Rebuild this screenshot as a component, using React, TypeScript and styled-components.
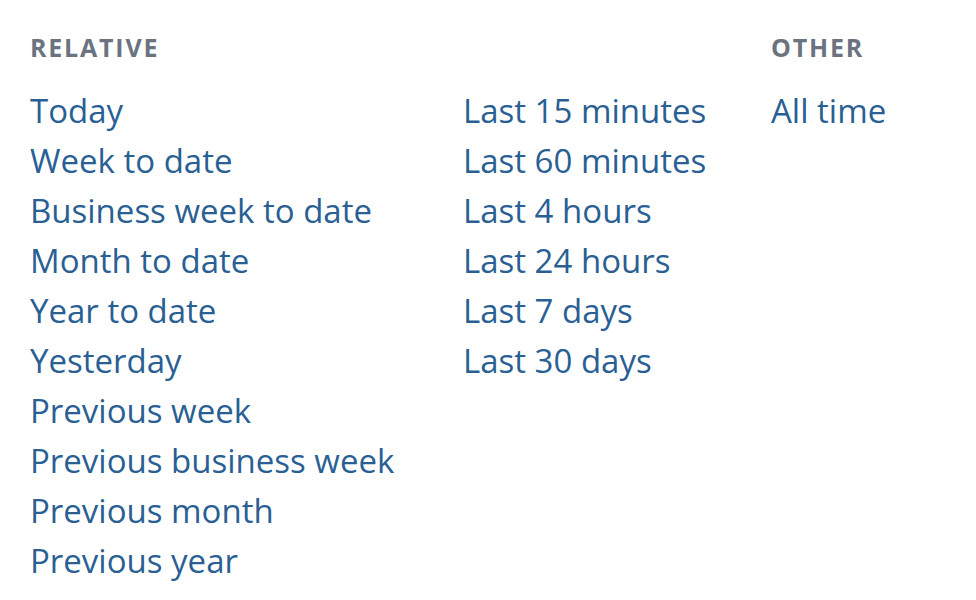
import React from 'react';
import styled, { createGlobalStyle } from 'styled-components';

const palette = {
  link: '#2a5f94',
  heading: '#6b7380',
};

const GlobalStyle = createGlobalStyle`
  body {
    margin: 0;
    background: #fff;
    font-family: 'Open Sans', 'Liberation Sans', sans-serif;
  }
`;

const relative = [
  'Today',
  'Week to date',
  'Business week to date',
  'Month to date',
  'Year to date',
  'Yesterday',
  'Previous week',
  'Previous business week',
  'Previous month',
  'Previous year',
];

const rolling = [
  'Last 15 minutes',
  'Last 60 minutes',
  'Last 4 hours',
  'Last 24 hours',
  'Last 7 days',
  'Last 30 days',
];

const other = ['All time'];

type ColumnProps = {
  title?: string;
  items: string[];
};

function PresetColumn({ title, items }: ColumnProps) {
  return (
    <Column>
      <Heading>{title || '\u00a0'}</Heading>
      <List>
        {items.map((item) => (
          <li key={item}>
            <a href="#">{item}</a>
          </li>
        ))}
      </List>
    </Column>
  );
}

function App() {
  return (
    <>
      <GlobalStyle />
      <Block>
        <PresetColumn title="RELATIVE" items={relative} />
        <PresetColumn items={rolling} />
        <PresetColumn title="OTHER" items={other} />
      </Block>
    </>
  );
}

const Block = styled.div`
  display: grid;
  grid-template-columns: 433px 308px 1fr;
  padding: 32px 30px 0 30px;
`;

const Column = styled.div`
  display: flex;
  flex-direction: column;
`;

const Heading = styled.h2`
  margin: 0 0 24px;
  font-size: 25px;
  line-height: 30px;
  font-weight: 700;
  letter-spacing: 1.8px;
  color: ${palette.heading};
`;

const List = styled.ul`
  list-style: none;
  margin: 0;
  padding: 0;

  li {
    height: 50px;
    font-size: 33px;
    line-height: 50px;
    white-space: nowrap;
  }
  a {
    color: ${palette.link};
    text-decoration: none;
  }
`;

export default App;
